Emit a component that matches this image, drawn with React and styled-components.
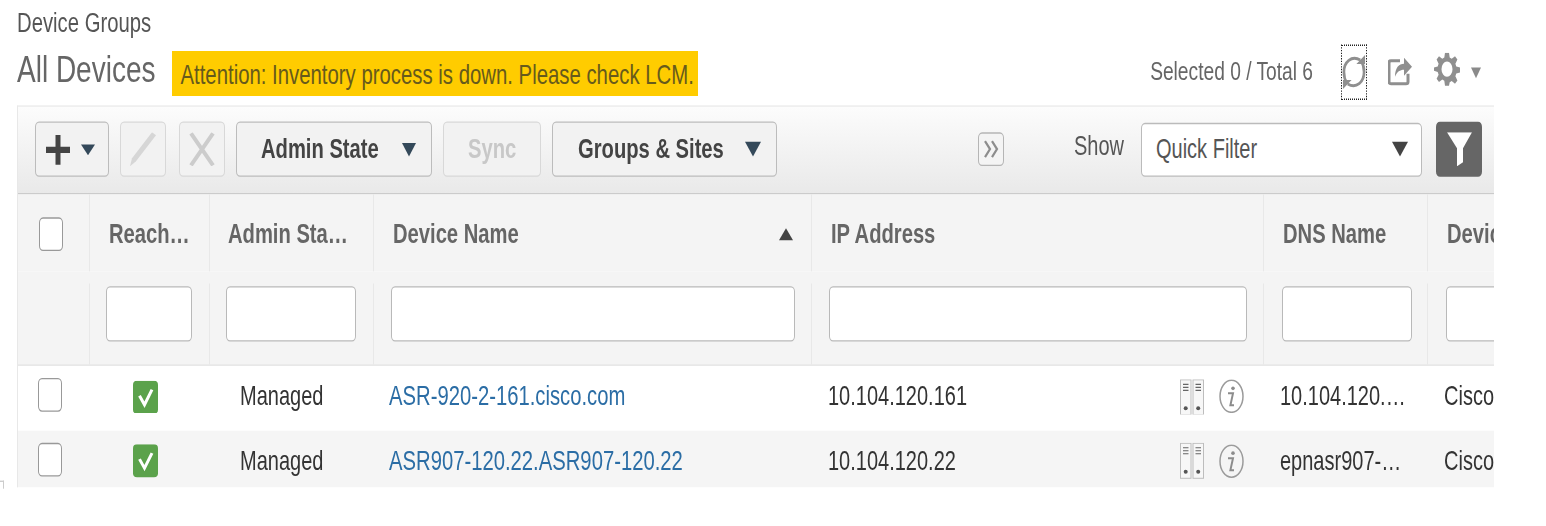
import React from 'react';
import styled, { createGlobalStyle } from 'styled-components';

// the whole shot is stretched vertically, so heights are written as measured and divided by this
const STRETCH = 1.35;
const v = (px) => `${px / STRETCH}px`;

const COLUMNS = '71px 120px 164px 438px 452px 164px 170px';

const GlobalStyle = createGlobalStyle`
  html, body, #root { margin: 0; padding: 0; height: 526px; background: #fff; }
  body { font-family: "Liberation Sans", Arial, sans-serif; }
`;

const Stage = styled.div`
  position: relative;
  width: 1546px;
  height: ${v(526)};
  padding-left: 18px;
  box-sizing: border-box;
  transform: scale(1, ${STRETCH});
  transform-origin: 0 0;
  filter: blur(0.35px);
`;

const CornerMark = styled.span`
  position: absolute;
  left: 0;
  top: ${v(481)};
  width: 3px;
  height: ${v(7)};
  border-top: 1px solid #ccc;
  border-right: 1px solid #ccc;
`;

const Crumb = styled.div`
  height: ${v(52)};
  line-height: ${v(47)};
  font-size: 20.3px;
  color: #555;
  margin-left: -1px;
`;

const TitleBar = styled.div`
  display: flex;
  align-items: center;
  width: 1476px;
  height: ${v(53)};
`;

const Title = styled.h1`
  margin: 0 17px 0 -1px;
  font-size: 28px;
  font-weight: 400;
  color: #666;
  position: relative;
  top: ${v(-8)};
`;

const Banner = styled.div`
  height: ${v(44)};
  width: 526px;
  box-sizing: border-box;
  padding-left: 8px;
  background: #ffcc00;
  color: #665a1c;
  font-size: 20.35px;
  line-height: ${v(46)};
  white-space: nowrap;
  position: relative;
  top: ${v(-4.7)};
`;

const TopActions = styled.div`
  margin-left: auto;
  display: flex;
  align-items: center;
  padding-right: 13px;
  position: relative;
  top: ${v(-6)};
`;

const Count = styled.span`
  font-size: 19.2px;
  color: #666;
  margin: 0 28px ${v(2)} 0;
`;

const FocusBox = styled.span`
  display: flex;
  align-items: center;
  justify-content: center;
  width: 26px;
  height: ${v(55)};
  box-sizing: border-box;
  border: 1px dotted #222;
  margin-right: 21px;
`;

const TopIcon = styled.span`
  display: flex;
  margin: 0 ${(p) => p.$right}px ${v(6)} 0;
`;

const Panel = styled.div`
  width: 1476px;
  height: ${v(383)};
  overflow: hidden;
  border-left: 1px solid #e8e8e8;
  margin-left: -1px;
`;

const Toolbar = styled.div`
  display: flex;
  align-items: center;
  height: ${v(89)};
  padding: 0 12px 0 17px;
  border-top: 1px solid #e6e6e6;
  border-bottom: 1px solid #c9c9c9;
  background: linear-gradient(#fcfcfc, #e9e9e9);
  box-sizing: border-box;
`;

const ToolButton = styled.div`
  display: flex;
  align-items: center;
  justify-content: ${(p) => (p.$center ? 'center' : 'flex-start')};
  width: ${(p) => p.$w}px;
  height: ${v(56)};
  box-sizing: border-box;
  margin-left: ${(p) => p.$gap ?? 11}px;
  padding-left: ${(p) => p.$pad ?? 0}px;
  border: 1px solid ${(p) => (p.$disabled ? '#d8d8d8' : '#bcbcbc')};
  border-radius: 4px;
  background: #f2f2f2;
  font-size: 20.2px;
  font-weight: 700;
  color: ${(p) => (p.$disabled ? '#c8c8c8' : '#444')};
`;

const Caret = styled.span`
  display: inline-block;
  width: 0;
  height: 0;
  margin-left: ${(p) => p.$gap ?? 0}px;
  border-left: ${(p) => p.$w / 2}px solid transparent;
  border-right: ${(p) => p.$w / 2}px solid transparent;
  border-top: ${(p) => v(p.$h)} solid ${(p) => p.$color || '#34495a'};
  ${(p) => p.$up && `
    border-top: 0;
    border-bottom: ${v(p.$h)} solid ${p.$color};
  `}
`;

const ExpandButton = styled.div`
  display: flex;
  align-items: center;
  justify-content: center;
  margin-left: auto;
  width: 26px;
  height: ${v(34)};
  box-sizing: border-box;
  border: 1.5px solid #b5b5b5;
  border-radius: 4px;
  background: #f4f4f4;
`;

const ShowLabel = styled.span`
  margin: 0 17px 0 70px;
  font-size: 20px;
  color: #555;
  position: relative;
  top: ${v(-3)};
`;

const Select = styled.div`
  display: flex;
  align-items: center;
  justify-content: space-between;
  width: 281px;
  height: ${v(54)};
  box-sizing: border-box;
  padding: 0 13px 0 14px;
  border: 1px solid #bbb;
  border-radius: 4px;
  background: #fff;
  font-size: 20px;
  color: #555;
`;

const FilterButton = styled.div`
  display: flex;
  align-items: center;
  justify-content: center;
  width: 46px;
  height: ${v(56)};
  margin-left: 14px;
  border-radius: 4px;
  background: #666;
`;

const Row = styled.div`
  display: grid;
  grid-template-columns: ${COLUMNS};
  height: ${(p) => v(p.$h)};
  background: ${(p) => p.$bg};
  border-bottom: ${(p) => (p.$line ? '1px solid #e2e2e2' : '0')};
  box-sizing: border-box;
`;

const HeadCell = styled.div`
  display: flex;
  align-items: center;
  justify-content: space-between;
  min-width: 0;
  padding: ${v(4)} ${(p) => p.$right ?? 18}px 0 ${(p) => p.$left ?? 19}px;
  border-left: ${(p) => (p.$first ? '0' : '1px solid #e8e8e8')};
  font-size: 20.2px;
  font-weight: 700;
  color: #666;
`;

const Clipped = styled.span`
  min-width: 0;
  overflow: hidden;
  white-space: nowrap;
  text-overflow: ellipsis;
`;

const FilterCell = styled.div`
  min-width: 0;
  margin-top: ${v(12)};
  padding: ${v(3)} ${(p) => p.$right ?? 17}px 0 ${(p) => p.$left ?? 16}px;
  border-left: ${(p) => (p.$first ? '0' : '1px solid #e8e8e8')};
`;

const FilterInput = styled.input`
  display: block;
  width: 100%;
  height: ${v(55)};
  box-sizing: border-box;
  padding: 0;
  border: 1px solid #b9b9b9;
  border-radius: 4px;
  background: #fff;
`;

const Box = styled.span`
  display: block;
  width: 24px;
  height: ${v(34)};
  box-sizing: border-box;
  border: 1.5px solid #999;
  border-radius: 4px;
  background: #fff;
  margin: 0 0 ${(p) => v(p.$lift ?? 0)} ${(p) => p.$left}px;
`;

const Cell = styled.div`
  display: flex;
  align-items: center;
  min-width: 0;
  padding: 0 ${(p) => p.$right ?? 0}px ${v(3)} ${(p) => p.$left ?? 0}px;
  font-size: ${(p) => p.$size ?? 20}px;
  color: #333;
  white-space: nowrap;
`;

const DeviceLink = styled.a`
  color: #2b6da5;
  text-decoration: none;
`;

const RowIcons = styled.span`
  display: flex;
  align-items: center;
  gap: 15px;
  margin-left: auto;
`;

const Plus = () => (
  <svg width="24" height={30 / STRETCH} viewBox="0 0 24 24" preserveAspectRatio="none">
    <path d="M9.5 0h5v9.5H24v5h-9.5V24h-5v-9.5H0v-5h9.5z" fill="#444" />
  </svg>
);

const Pencil = () => (
  <svg width="26" height={34 / STRETCH} viewBox="0 0 26 34" preserveAspectRatio="none">
    <path d="M22 0l4 3L6 29 0 34l2-8z" fill="#d6d6d6" />
  </svg>
);

const Cross = () => (
  <svg width="26" height={34 / STRETCH} viewBox="0 0 26 34" preserveAspectRatio="none">
    <path d="M2 1l22 32M24 1L2 33" stroke="#cccccc" strokeWidth="4" fill="none" />
  </svg>
);

const Refresh = () => (
  <svg width="24" height={36 / STRETCH} viewBox="0 0 25 36" preserveAspectRatio="none">
    <g fill="none" stroke="#8f8f8f" strokeWidth="2.8">
      <path d="M19 6C10 1 2 8 2 18c0 5 1 8 3 11" />
      <path d="M6 30c9 5 17-2 17-12 0-5-1-8-3-11" />
    </g>
    <path d="M15 10h9V1zM10 26H1v9z" fill="#8f8f8f" />
  </svg>
);

const Share = () => (
  <svg width="24" height={33 / STRETCH} viewBox="0 0 24 33" preserveAspectRatio="none">
    <path d="M12 8H3a2 2 0 0 0-2 2v19a2 2 0 0 0 2 2h15a2 2 0 0 0 2-2v-8" fill="none" stroke="#8f8f8f" strokeWidth="3" />
    <path d="M7 24c0-9 4-13 9-13V5l8 9-8 9v-6c-4 0-7 2-9 7z" fill="#8f8f8f" />
  </svg>
);

const Gear = () => (
  <svg width="26" height={33 / STRETCH} viewBox="-1 0 26 24" preserveAspectRatio="none">
    <path
      fillRule="evenodd"
      fill="#8f8f8f"
      d="M10 0h4l.7 3.6 2 .9L20 2.6 22.4 5l-2 3 .9 2 3.7.8v3.6l-3.7.8-.9 2 2 3-2.4 2.4-3.3-1.9-2 .9L14 24h-4l-.7-3.600-2-.9L4 21.400 1.600 19l2-3-.9-2L-1 13.200V10.800L2.700 10l.9-2-2-3L4 2.600l3.300 1.900 2-.9zM12 6.500a5.500 5.500 0 1 0 0 11 5.500 5.500 0 0 0 0-11z"
    />
  </svg>
);

const Chevrons = () => (
  <svg width="16" height={20 / STRETCH} viewBox="0 0 16 20" preserveAspectRatio="none">
    <path d="M2 2l5 8-5 8M9 2l5 8-5 8" fill="none" stroke="#8d8d8d" strokeWidth="2.200" />
  </svg>
);

const Funnel = () => (
  <svg width="25" height={34 / STRETCH} viewBox="0 0 25 34" preserveAspectRatio="none">
    <path d="M0 0h25L16 16v14l-6 4V16z" fill="#fff" />
  </svg>
);

const StatusOk = () => (
  <svg width="25" height={33 / STRETCH} viewBox="0 0 25 33" preserveAspectRatio="none">
    <rect width="25" height="33" rx="4" fill="#5ba24b" />
    <path d="M6.500 15l5 9 7.500-15" fill="none" stroke="#fff" strokeWidth="3" />
  </svg>
);

const Chassis = () => (
  <svg width="24" height={36 / STRETCH} viewBox="0 0 24 36" preserveAspectRatio="none">
    <g fill="#f7f7f7" stroke="#bdbdbd">
      <rect x="0.500" y="0.500" width="10.500" height="35" />
      <rect x="13" y="0.500" width="10.500" height="35" />
    </g>
    <path d="M3 5h5.500M3 8h5.500M3 11h5.500M15.500 5H21M15.500 8H21M15.500 11H21" stroke="#666" strokeWidth="1.100" />
    <circle cx="5.700" cy="29" r="2" fill="#555" />
    <circle cx="18.200" cy="29" r="2" fill="#555" />
  </svg>
);

const Info = () => (
  <svg width="25" height={34 / STRETCH} viewBox="0 0 25 34" preserveAspectRatio="none">
    <ellipse cx="12.500" cy="17" rx="11.500" ry="16" fill="none" stroke="#9b9b9b" strokeWidth="1.500" />
    <circle cx="14" cy="9" r="1.800" fill="#8c8c8c" />
    <path d="M9 14h5l-2.600 12h3.600" fill="none" stroke="#8c8c8c" strokeWidth="2" />
  </svg>
);

const devices = [
  { name: 'ASR-920-2-161.cisco.com', ip: '10.104.120.161', dns: '10.104.120.161', bg: '#fff' },
  { name: 'ASR907-120.22.ASR907-120.22', ip: '10.104.120.22', dns: 'epnasr907-120.22', bg: '#f5f5f5' },
];

export default function App() {
  return (
    <>
      <GlobalStyle />
      <Stage>
        <Crumb>Device Groups</Crumb>
        <TitleBar>
          <Title>All Devices</Title>
          <Banner>Attention: Inventory process is down. Please check LCM.</Banner>
          <TopActions>
            <Count>Selected 0 / Total 6</Count>
            <FocusBox><Refresh /></FocusBox>
            <TopIcon $right={22}><Share /></TopIcon>
            <TopIcon $right={0}><Gear /></TopIcon>
            <Caret $w={10} $h={12} $color="#8a8a8a" $gap={11} />
          </TopActions>
        </TitleBar>

        <Panel>
          <Toolbar>
            <ToolButton $w={74} $gap={0} $pad={10}>
              <Plus />
              <Caret $w={14} $h={12} $gap={11} />
            </ToolButton>
            <ToolButton $w={46} $center $disabled><Pencil /></ToolButton>
            <ToolButton $w={46} $gap={13} $center $disabled><Cross /></ToolButton>
            <ToolButton $w={196} $pad={24}>
              Admin State
              <Caret $w={15} $h={14} $gap={23} />
            </ToolButton>
            <ToolButton $w={98} $pad={24} $disabled>Sync</ToolButton>
            <ToolButton $w={225} $pad={25}>
              Groups &amp; Sites
              <Caret $w={16} $h={15} $gap={21} />
            </ToolButton>
            <ExpandButton><Chevrons /></ExpandButton>
            <ShowLabel>Show</ShowLabel>
            <Select>
              Quick Filter
              <Caret $w={17} $h={16} $color="#444" />
            </Select>
            <FilterButton><Funnel /></FilterButton>
          </Toolbar>

          <Row $h={77} $bg="#f4f4f4">
            <HeadCell $first $left={21}><Box $left={0} /></HeadCell>
            <HeadCell $right={17}><Clipped>Reachability</Clipped></HeadCell>
            <HeadCell $left={18} $right={21}><Clipped>Admin Status</Clipped></HeadCell>
            <HeadCell>
              <Clipped>Device Name</Clipped>
              <Caret $up $w={15} $h={13} $color="#444" />
            </HeadCell>
            <HeadCell><Clipped>IP Address</Clipped></HeadCell>
            <HeadCell><Clipped>DNS Name</Clipped></HeadCell>
            <HeadCell $right={0}><Clipped>Device Type</Clipped></HeadCell>
          </Row>
          <Row $h={95} $bg="#f4f4f4" $line>
            <FilterCell $first />
            <FilterCell><FilterInput /></FilterCell>
            <FilterCell><FilterInput /></FilterCell>
            <FilterCell $left={17} $right={16}><FilterInput /></FilterCell>
            <FilterCell $left={17} $right={16}><FilterInput /></FilterCell>
            <FilterCell $left={18} $right={15}><FilterInput /></FilterCell>
            <FilterCell $left={18} $right={0}><FilterInput /></FilterCell>
          </Row>

          {devices.map((d) => (
            <Row key={d.name} $h={64.5} $bg={d.bg}>
              <Cell><Box $left={20} $lift={3} /></Cell>
              <Cell $left={44}><StatusOk /></Cell>
              <Cell $left={31}>Managed</Cell>
              <Cell $left={16} $size={20.25}><DeviceLink href="#">{d.name}</DeviceLink></Cell>
              <Cell $left={17} $right={19}>
                {d.ip}
                <RowIcons><Chassis /><Info /></RowIcons>
              </Cell>
              <Cell $left={17} $right={17}><Clipped>{d.dns}</Clipped></Cell>
              <Cell $left={17}>Cisco ASR</Cell>
            </Row>
          ))}
        </Panel>
        <CornerMark />
      </Stage>
    </>
  );
}
